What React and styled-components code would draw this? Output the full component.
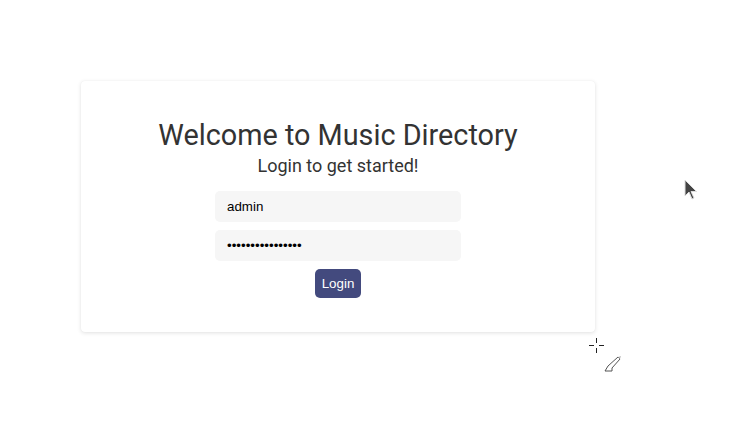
import React from "react";
import styled, { createGlobalStyle } from "styled-components";

const Global = createGlobalStyle`
  html, body { margin: 0; padding: 0; background: #fff; }
  body { font-family: Roboto, "Liberation Sans", sans-serif; }
`;

const Page = styled.div`
  position: relative;
  width: 742px;
  height: 423px;
  padding: 81px 0 0 81px;
  box-sizing: border-box;
`;

const Card = styled.div`
  width: 514px;
  height: 251px;
  box-sizing: border-box;
  background: #fff;
  border-radius: 4px;
  box-shadow: 0 1px 4px rgba(0, 0, 0, 0.12), 0 0 1px rgba(0, 0, 0, 0.06);
  display: flex;
  flex-direction: column;
  align-items: center;
  padding-top: 36px;
`;

const Title = styled.h1`
  margin: 0;
  font-family: Roboto, sans-serif;
  font-weight: 400;
  font-size: 28.8px;
  line-height: 36px;
  color: #333;
`;

const Subtitle = styled.h2`
  margin: 2px 0 0;
  font-family: Roboto, sans-serif;
  font-weight: 400;
  font-size: 18px;
  line-height: 22px;
  color: #333;
`;

const Form = styled.form`
  margin-top: 14px;
  display: flex;
  flex-direction: column;
  align-items: center;
  gap: 8px;
`;

const Input = styled.input`
  width: 246px;
  height: 31px;
  box-sizing: border-box;
  border: none;
  outline: none;
  border-radius: 5px;
  background: #f6f6f6;
  padding: 0 12px;
  font-family: "Liberation Sans", Arial, sans-serif;
  font-size: 13.33px;
  color: #000;
`;

const Button = styled.button`
  margin-top: 0;
  height: 29px;
  padding: 0 7px;
  border: none;
  border-radius: 5px;
  background: #434a7e;
  color: #fff;
  font-family: "Liberation Sans", Arial, sans-serif;
  font-size: 13.33px;
`;

const Overlay = styled.svg`
  position: absolute;
  left: ${(p) => p.$x}px;
  top: ${(p) => p.$y}px;
`;

export default function App() {
  return (
    <>
      <Global />
      <Page>
        <Card>
          <Title>Welcome to Music Directory</Title>
          <Subtitle>Login to get started!</Subtitle>
          <Form onSubmit={(e) => e.preventDefault()}>
            <Input type="text" defaultValue="admin" />
            <Input type="password" defaultValue="adminadmin123456" />
            <Button type="submit">Login</Button>
          </Form>
        </Card>
        <Overlay $x={683} $y={179} width="16" height="24" viewBox="0 0 16 24">
          <path d="M2 1 L2 17 L6 13 L9 20 L11 19 L8 12.5 L13.5 12.5 Z" fill="#444" stroke="#ddd" strokeWidth="1" strokeLinejoin="round" />
        </Overlay>
        <Overlay $x={588} $y={337} width="17" height="17" viewBox="0 0 17 17">
          <path d="M8.5 1 V6 M8.5 11 V16 M1 8.5 H6 M11 8.5 H16" stroke="#222" strokeWidth="1" />
        </Overlay>
        <Overlay $x={603} $y={354} width="20" height="19" viewBox="0 0 20 19">
          <path d="M2 17 L5 12 L15 3 L17 5 L9 14 L9 17 Z" fill="none" stroke="#555" strokeWidth="1" strokeLinejoin="round" />
          <path d="M15 3 L17 5 L18 2 Z" fill="#bbb" />
        </Overlay>
      </Page>
    </>
  );
}
